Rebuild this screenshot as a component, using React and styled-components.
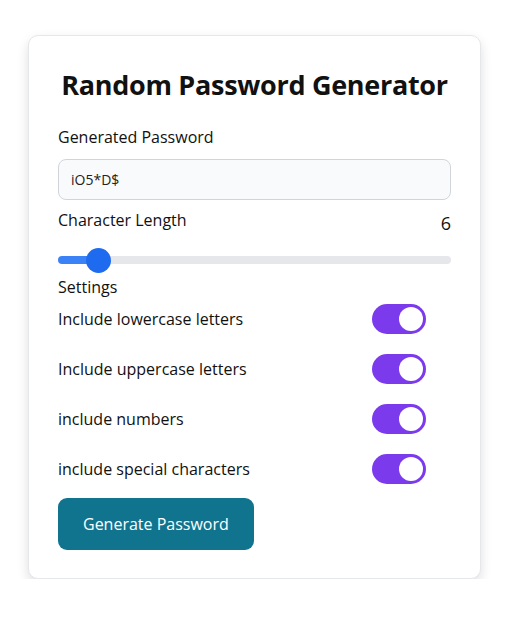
import { useState } from 'react';
import styled, { createGlobalStyle } from 'styled-components';

const GlobalStyle = createGlobalStyle`
  * { box-sizing: border-box; }
  body {
    margin: 0;
    background: #fff;
    font-family: "Open Sans", "Noto Sans", sans-serif;
    color: #111;
  }
`;

const Page = styled.div`
  padding: 35px 0 0 28px;
`;

const Card = styled.div`
  width: 453px;
  padding: 31px 29px 28px 29px;
  background: #fff;
  border: 1px solid #e5e7eb;
  border-radius: 10px;
  box-shadow: 0 5px 12px rgba(0, 0, 0, 0.13);
`;

const Title = styled.h1`
  margin: 0 0 22px;
  font-size: 27px;
  line-height: 36px;
  font-weight: 700;
  text-align: center;
  letter-spacing: -0.3px;
`;

const Label = styled.div`
  font-size: 16px;
  line-height: 24px;
  color: #111;
`;

const PasswordInput = styled.input`
  display: block;
  width: 100%;
  height: 41px;
  margin: 10px 0 8px;
  padding: 0 12px;
  font: inherit;
  font-size: 14px;
  color: #222;
  background: #f9fafb;
  border: 1px solid #d1d5db;
  border-radius: 8px;
  outline: none;
`;

const LengthRow = styled.div`
  display: flex;
  justify-content: space-between;
  align-items: flex-start;
`;

const LengthValue = styled.span`
  font-size: 18px;
  line-height: 28px;
  margin-top: 1px;
`;

const Range = styled.input`
  display: block;
  width: 100%;
  height: 26px;
  margin: 10px 0 2px;
  appearance: none;
  -webkit-appearance: none;
  background: transparent;

  &::-webkit-slider-runnable-track {
    height: 8px;
    border-radius: 4px;
    background: linear-gradient(
      to right,
      #3b82f6 0%,
      #3b82f6 var(--fill),
      #e5e7eb var(--fill),
      #e5e7eb 100%
    );
  }

  &::-webkit-slider-thumb {
    -webkit-appearance: none;
    width: 25px;
    height: 25px;
    margin-top: -8.5px;
    border-radius: 50%;
    background: #1f6bf0;
    border: none;
  }
`;

const OptionList = styled.div`
  display: flex;
  flex-direction: column;
  gap: 20px;
  margin-top: 5px;
  padding-right: 25px;
`;

const OptionRow = styled.label`
  display: flex;
  justify-content: space-between;
  align-items: center;
  height: 30px;
  font-size: 16px;
  cursor: pointer;
`;

const Toggle = styled.span`
  position: relative;
  width: 54px;
  height: 30px;
  border-radius: 15px;
  background: ${(p) => (p.$on ? '#7c3aed' : '#d1d5db')};

  &::after {
    content: '';
    position: absolute;
    top: 3px;
    left: ${(p) => (p.$on ? '27px' : '3px')};
    width: 24px;
    height: 24px;
    border-radius: 50%;
    background: #fff;
  }
`;

const GenerateButton = styled.button`
  margin-top: 14px;
  height: 52px;
  padding: 0 25px;
  font: inherit;
  font-size: 16px;
  color: #fff;
  background: #10748f;
  border: none;
  border-radius: 9px;
  cursor: pointer;
`;

const options = [
  ['lower', 'Include lowercase letters'],
  ['upper', 'Include uppercase letters'],
  ['numbers', 'include numbers'],
  ['special', 'include special characters'],
];

const App = () => {
  const [length, setLength] = useState(6);
  const [settings, setSettings] = useState({ lower: true, upper: true, numbers: true, special: true });
  const min = 4;
  const max = 30;
  const fill = ((length - min) / (max - min)) * 100;

  return (
    <Page>
      <GlobalStyle />
      <Card>
        <Title>Random Password Generator</Title>
        <Label>Generated Password</Label>
        <PasswordInput readOnly value="iO5*D$" />
        <LengthRow>
          <Label>Character Length</Label>
          <LengthValue>{length}</LengthValue>
        </LengthRow>
        <Range
          type="range"
          min={min}
          max={max}
          value={length}
          onChange={(e) => setLength(Number(e.target.value))}
          style={{ '--fill': `calc(12px + ${fill}% - ${fill * 0.25}px)` }}
        />
        <Label>Settings</Label>
        <OptionList>
          {options.map(([key, text]) => (
            <OptionRow
              key={key}
              onClick={() => setSettings({ ...settings, [key]: !settings[key] })}
            >
              {text}
              <Toggle $on={settings[key]} />
            </OptionRow>
          ))}
        </OptionList>
        <GenerateButton>Generate Password</GenerateButton>
      </Card>
    </Page>
  );
};

export default App;
